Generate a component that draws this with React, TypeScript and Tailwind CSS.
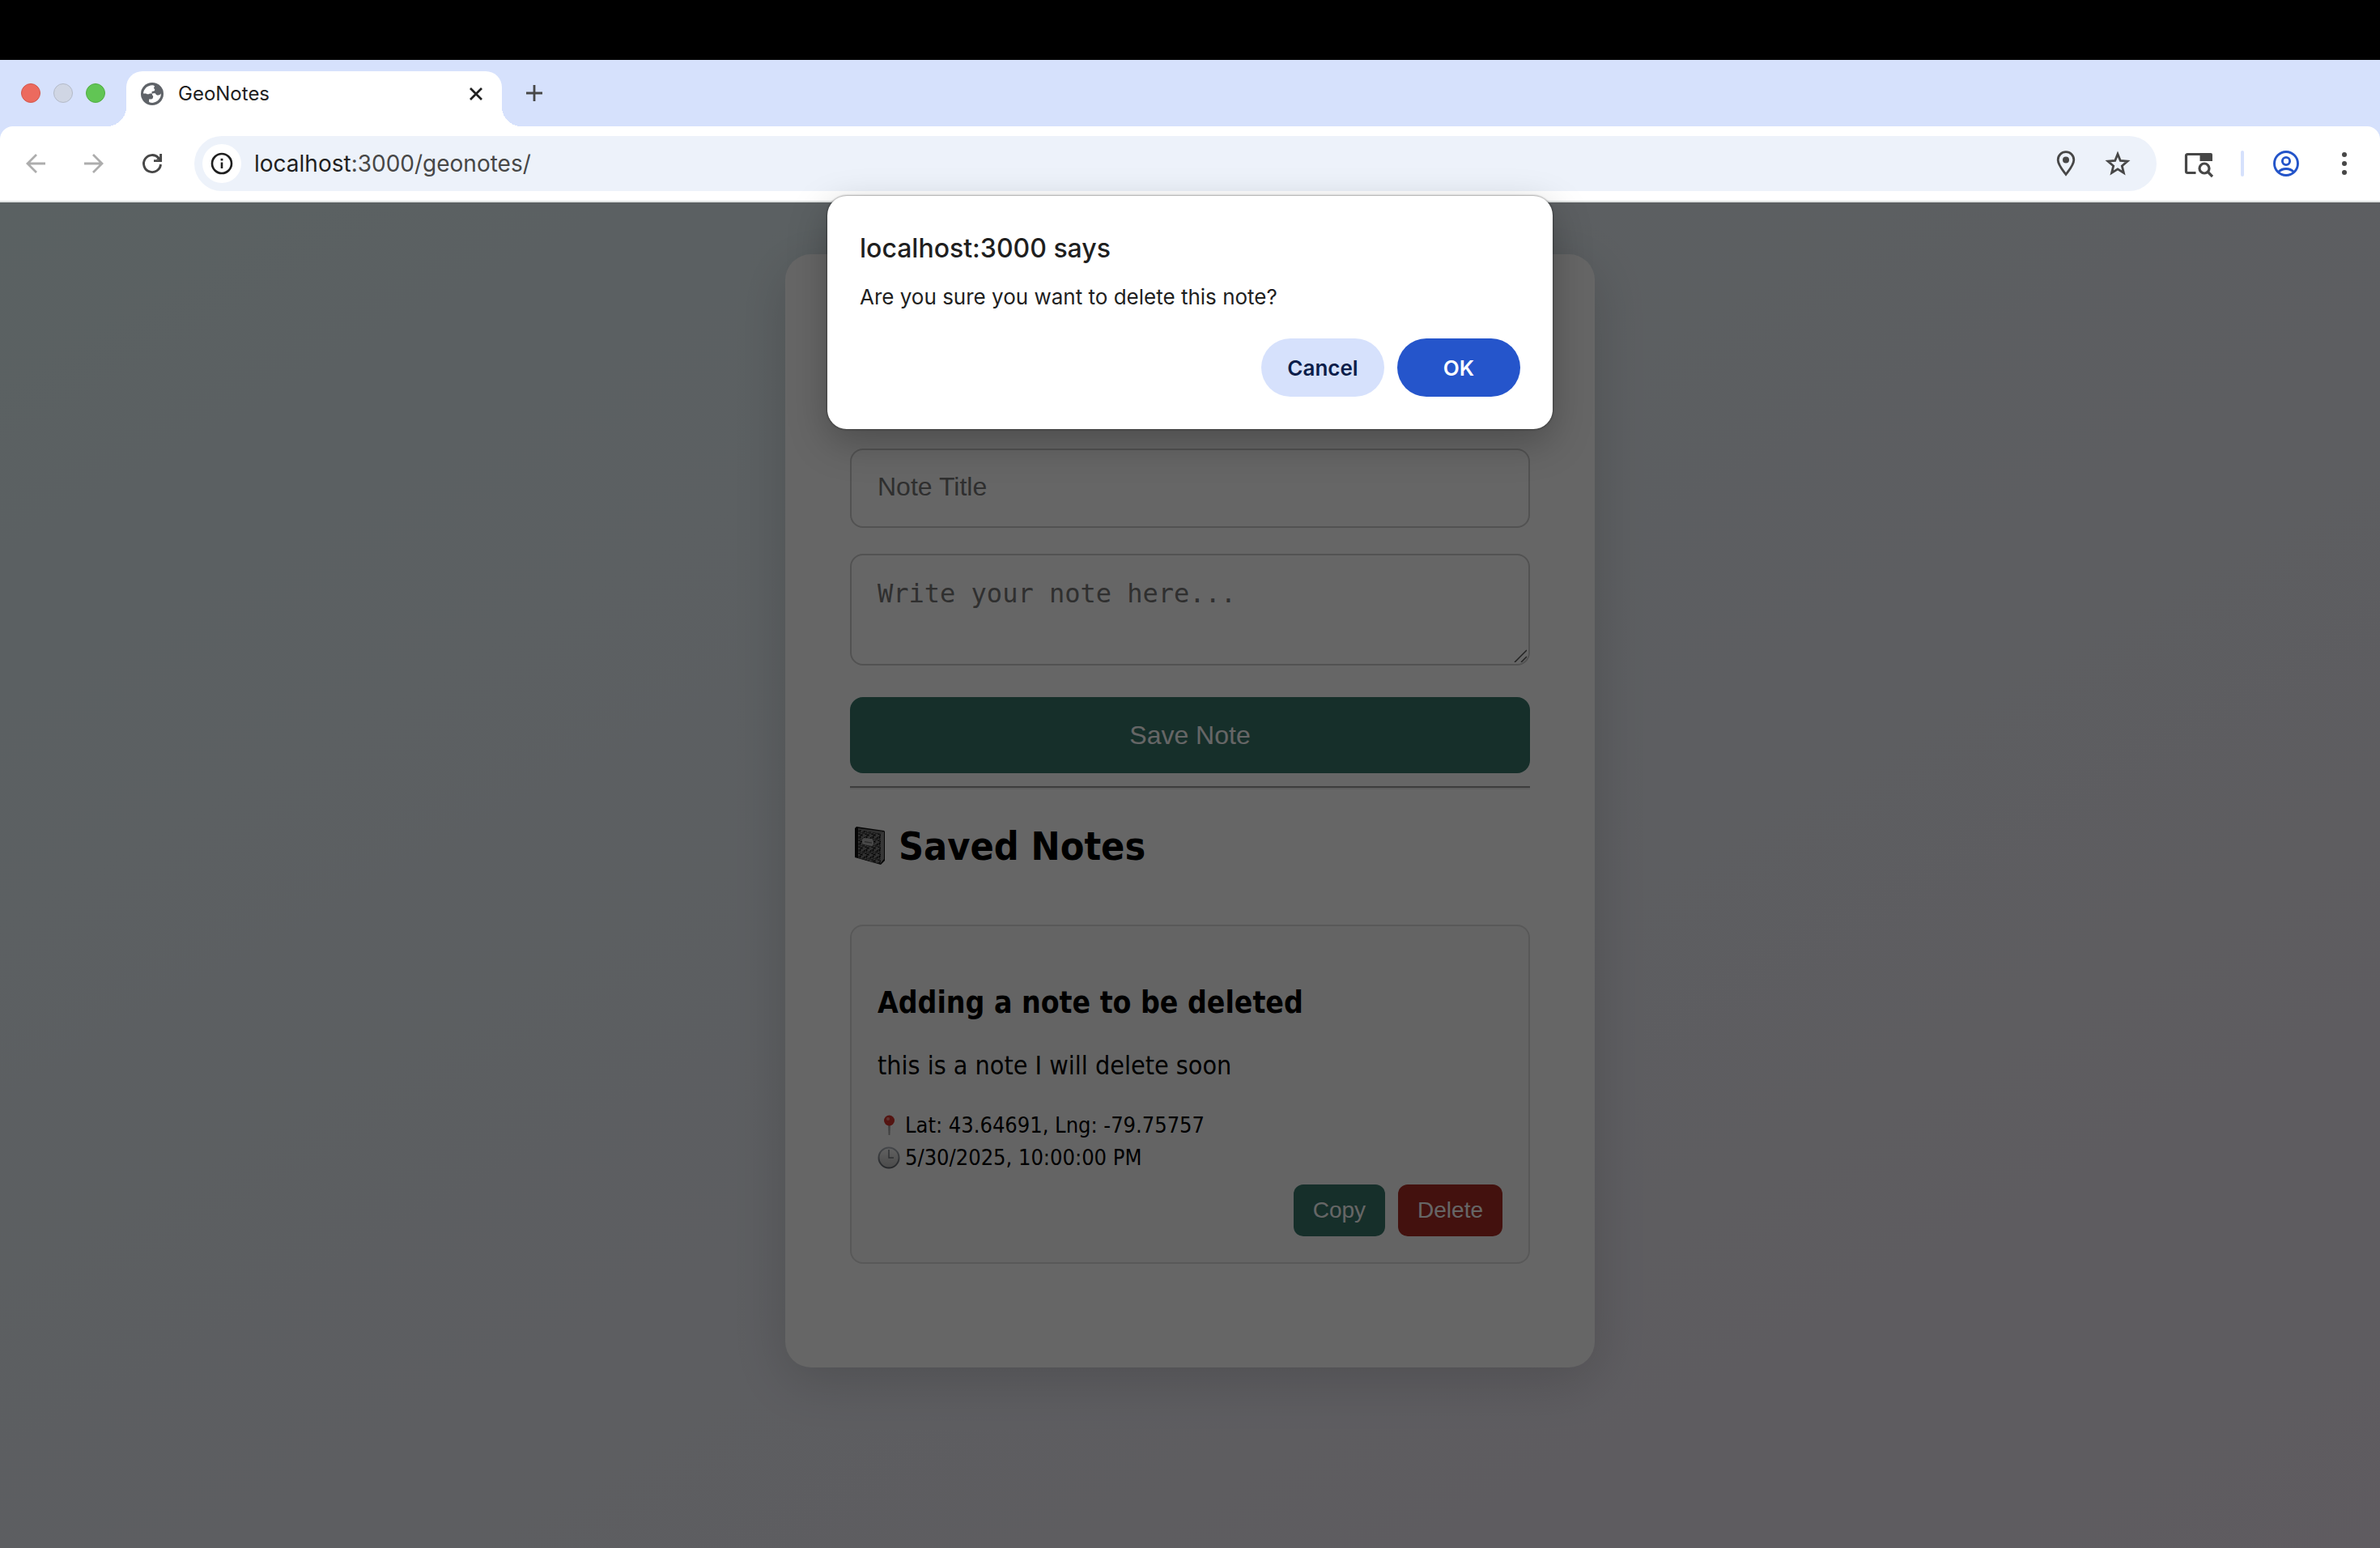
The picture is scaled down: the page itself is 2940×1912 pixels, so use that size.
import React from "react";

const TAHOMA = "font-['DejaVu_Sans_Condensed','DejaVu_Sans',sans-serif]";

function TrafficLights() {
  return (
    <div className="flex h-full items-center gap-4 pl-[26px]">
      <span className="size-6 rounded-full border border-[#d3564b] bg-[#ec6a5e]" />
      <span className="size-6 rounded-full border border-[#b3bac8] bg-[#d0d6e4]" />
      <span className="size-6 rounded-full border border-[#4fae41] bg-[#61c554]" />
    </div>
  );
}

function Tab() {
  return (
    <div className="relative ml-[26px] mt-[14px] flex w-[464px] items-center rounded-t-[20px] bg-white px-[18px] pb-3">
      <span className="absolute -left-6 bottom-0 size-6 bg-[radial-gradient(circle_at_0_0,transparent_24px,#fff_24px)]" />
      <span className="absolute -right-6 bottom-0 size-6 bg-[radial-gradient(circle_at_100%_0,transparent_24px,#fff_24px)]" />
      <svg className="size-7" viewBox="0 0 28 28" aria-hidden="true">
        <circle cx="14" cy="14" r="14" fill="#5f6368" />
        <path
          fill="#fff"
          d="M3 13.4C3.4 8 8 3.3 14.2 3.2c2.400 0 3.300 1.200 2.300 2.500-1 1-.5 1.700.5 2 .8 1.800-.4 3-2.200 3.100-1.600.1-1.700 1.600-.9 2.600H11c-1.200 1.300-3.200 1.200-4.600 0zM24.900 13.300c.3 6.200-4.600 11.400-10.600 11.600-1.600 0-3-.3-4.200-.9v-3.600h2.600c1.500 0 2.400-1 2.400-2.600v-1.600c-1.500-.1-1.700-2.300-.3-2.900h3.100c.5 1.600 2 2.600 3.800 2.300 1.600-.2 2.700-1 3.200-2.300z"
        />
      </svg>
      <span className="ml-[18px] flex-1 text-[24px] leading-8 text-[#1f1f1f]">GeoNotes</span>
      <button type="button" aria-label="Close tab" className="mr-[5px]">
        <svg className="size-[18px]" viewBox="0 0 18 18" stroke="#1f1f1f" strokeWidth="2.800">
          <path d="M2 2l14 14M16 2L2 16" />
        </svg>
      </button>
    </div>
  );
}

function Toolbar() {
  return (
    <div className="bg-[#d6e1fc]">
      <div className="flex h-[94px] items-center rounded-t-[16px] border-b-2 border-[#dfe2e1] bg-white px-7">
        <button type="button" aria-label="Back">
          <svg className="size-8" viewBox="0 0 32 32" fill="none" stroke="#adadad" strokeWidth="2.800">
            <path d="M28 16H6M17 5L6 16l11 11" />
          </svg>
        </button>
        <button type="button" aria-label="Forward" className="ml-10">
          <svg className="size-8" viewBox="0 0 32 32" fill="none" stroke="#adadad" strokeWidth="2.800">
            <path d="M4 16h22M15 5l11 11-11 11" />
          </svg>
        </button>
        <button type="button" aria-label="Reload" className="ml-10">
          <svg className="size-8" viewBox="0 0 32 32" fill="none" stroke="#474747" strokeWidth="2.900">
            <path d="M26.500 17A10.500 10.500 0 1 1 23.800 9l2.700 3" />
            <path d="M26.600 4v8.600H18" />
            <path d="M25 8v3h-4z" fill="#474747" stroke="none" />
          </svg>
        </button>
        <div className="ml-9 flex h-[68px] flex-1 items-center rounded-full bg-[#edf2fa] pr-8 pl-[10px]">
          <button type="button" aria-label="View site information" className="flex size-12 items-center justify-center rounded-full bg-white">
            <svg className="size-7" viewBox="0 0 28 28" fill="none" stroke="#1f1f1f">
              <circle cx="14" cy="14" r="12" strokeWidth="2.600" />
              <path d="M14 12.500V20" strokeWidth="2.600" />
              <path d="M14 7.800v2.700" strokeWidth="2.800" />
            </svg>
          </button>
          <div className="ml-4 flex-1 text-[28px] leading-9 text-[#474747]">
            <span className="text-[#1f1f1f]">localhost</span>:3000/geonotes/
          </div>
          <button type="button" aria-label="Location">
            <svg className="size-8" viewBox="0 0 32 32" fill="none">
              <path d="M16 29.500C11.500 23.500 6.200 17.500 6.200 11.500a9.800 9.800 0 0 1 19.600 0c0 6-5.300 12-9.800 18z" stroke="#474747" strokeWidth="2.800" />
              <circle cx="16" cy="11.500" r="4" fill="#474747" />
            </svg>
          </button>
          <button type="button" aria-label="Bookmark this tab" className="ml-8">
            <svg className="size-8" viewBox="0 0 32 32" fill="none" stroke="#474747" strokeWidth="2.800">
              <path d="M16 4.300l3.300 8.200 8.700.7-6.700 5.700 2.100 8.600L16 22.900l-7.400 4.600 2.100-8.600L4 13.200l8.700-.7z" />
            </svg>
          </button>
        </div>
        <button type="button" aria-label="Search tabs" className="ml-[34px]">
          <svg className="size-9" viewBox="0 0 36 36" fill="none">
            <path d="M14.500 29.500H4.500a2 2 0 0 1-2-2V8.500a2 2 0 0 1 2-2H33" stroke="#474747" strokeWidth="3.200" />
            <path d="M19.500 5h13.500a2 2 0 0 1 2 2v8H19.500z" fill="#474747" />
            <circle cx="25" cy="24" r="6" stroke="#474747" strokeWidth="3.200" />
            <path d="M29 28l6 6" stroke="#474747" strokeWidth="3.200" />
          </svg>
        </button>
        <span className="ml-[34px] h-8 w-1 rounded-full bg-[#d6e1fc]" />
        <button type="button" aria-label="Profile" className="ml-9">
          <svg className="size-8" viewBox="0 0 32 32" fill="none" stroke="#2354c9" strokeWidth="2.900">
            <circle cx="16" cy="16" r="14.500" />
            <circle cx="16" cy="13" r="4.600" />
            <path d="M6.500 26.500c5-5.300 14-5.300 19 0" />
          </svg>
        </button>
        <button type="button" aria-label="Menu" className="ml-10">
          <svg className="size-8" viewBox="0 0 32 32" fill="#474747">
            <circle cx="16" cy="5" r="3" />
            <circle cx="16" cy="16" r="3" />
            <circle cx="16" cy="27" r="3" />
          </svg>
        </button>
      </div>
    </div>
  );
}

function NotebookIcon() {
  return (
    <svg className="size-12" viewBox="0 0 48 48" aria-hidden="true">
      <defs>
        <pattern id="marble" width="8" height="8" patternUnits="userSpaceOnUse">
          <rect width="8" height="8" fill="#4a4a4a" />
          <path d="M0 1h2v1h2v2H2v2H0zM5 0h2v1H5zM6 4h2v2H7v1H5V6h1zM2 7h2v1H2z" fill="#7c7c7c" />
          <path d="M3 1h1v1H3zM5 2h2v1H5zM1 5h1v2H1zM4 4h1v2H4z" fill="#151515" />
        </pattern>
      </defs>
      <path d="M6 2l2-2 34 5 1 1v36l-5 5L6 38z" fill="#111" />
      <path d="M38 8l4-2v34l-4 5z" fill="#8a8a8a" />
      <path d="M10 2l31 4-3 3-28-5z" fill="#777" />
      <path d="M10 4l28 5v37L10 39z" fill="url(#marble)" />
      <path d="M17 14l10 1 2 3v4l-2 2-10-2-2-2v-4z" fill="#b5b5b5" />
      <path d="M18 18l9 1.500v1.200L18 19.200z" fill="#666" />
    </svg>
  );
}

function PinIcon() {
  return (
    <svg className="size-7" viewBox="0 0 28 28" aria-hidden="true">
      <path d="M13 13h3l-.6 13h-1.800z" fill="#a4a4a4" />
      <circle cx="14.500" cy="8" r="6.500" fill="#d2322c" />
      <circle cx="13" cy="6" r="2" fill="#ee8078" />
    </svg>
  );
}

function ClockIcon() {
  return (
    <svg className="size-7" viewBox="0 0 28 28" aria-hidden="true">
      <defs>
        <linearGradient id="face" x1="0" y1="0" x2="0" y2="1">
          <stop offset="0" stopColor="#f4f4f4" />
          <stop offset="1" stopColor="#b9b9b9" />
        </linearGradient>
        <linearGradient id="rim" x1="0" y1="0" x2="0" y2="1">
          <stop offset="0" stopColor="#aab0b8" />
          <stop offset="1" stopColor="#5f646b" />
        </linearGradient>
      </defs>
      <circle cx="14" cy="14" r="12.500" fill="url(#face)" stroke="url(#rim)" strokeWidth="2" />
      <path d="M14 4v10h6" fill="none" stroke="#70757c" strokeWidth="1.400" />
    </svg>
  );
}

function NotesPage() {
  return (
    <main className={`min-h-[1662px] bg-[linear-gradient(to_bottom_right,#e2f3f6_0%,#ede4ef_100%)] px-4 pt-16 ${TAHOMA}`}>
      <section className="mx-auto flex w-full max-w-[1000px] flex-col rounded-[32px] bg-white px-20 pt-[240px] pb-32 shadow-[0_16px_64px_rgba(0,0,0,0.15)]">
        <input
          aria-label="Note Title"
          placeholder="Note Title"
          className="h-[98px] w-full rounded-[16px] border-2 border-[#ccc] px-8 pb-1 font-['Liberation_Sans',sans-serif] text-[32px] placeholder:text-[#757575]"
        />
        <div className="relative mt-8 flex">
          <textarea
            aria-label="Note text"
            placeholder="Write your note here..."
            className="h-[138px] w-full resize-none rounded-[16px] border-2 border-[#ccc] px-8 py-7 font-['DejaVu_Sans_Mono',monospace] text-[32px] leading-[38px] placeholder:text-[#757575]"
          />
          <svg className="absolute right-1 bottom-1 size-4" viewBox="0 0 16 16" stroke="#555" strokeWidth="1.500" aria-hidden="true">
            <path d="M1 16L16 1M9 16l7-7" />
          </svg>
        </div>
        <button type="button" className="mt-[39px] h-[94px] rounded-[16px] bg-[#37766a] font-['Liberation_Sans',sans-serif] text-[32px] text-white">
          Save Note
        </button>
        <hr className="mt-4 h-1 border-t-2 border-b-2 border-t-[#9a9a9a] border-b-[#eee]" />
        <h2 className="mt-[41px] flex items-center text-[48px] leading-[58px] font-bold">
          <NotebookIcon />
          <span className="ml-3">Saved Notes</span>
        </h2>
        <article className="mt-[68px] flex flex-col rounded-[16px] border-2 border-[#ddd] bg-[#f9f9f9] px-8 pt-[72px] pb-8">
          <h3 className="text-[37px] leading-[46px] font-bold">Adding a note to be deleted</h3>
          <p className="mt-[34px] text-[32px] leading-10">this is a note I will delete soon</p>
          <div className="mt-[34px] text-[27px] leading-10">
            <div className="flex items-center gap-[6px]">
              <PinIcon />
              Lat: 43.64691, Lng: -79.75757
            </div>
            <div className="flex items-center gap-[6px]">
              <ClockIcon />
              5/30/2025, 10:00:00 PM
            </div>
          </div>
          <div className="mt-[13px] flex justify-end gap-4 font-['Liberation_Sans',sans-serif] text-[28px] leading-8 text-white">
            <button type="button" className="rounded-[12px] bg-[#37766a] px-6 py-4">Copy</button>
            <button type="button" className="rounded-[12px] bg-[#a92c23] px-6 py-4">Delete</button>
          </div>
        </article>
      </section>
    </main>
  );
}

function ConfirmDialog() {
  return (
    <div
      role="dialog"
      aria-labelledby="dialog-title"
      className="absolute inset-x-0 -top-2 mx-auto flex w-[896px] flex-col rounded-[24px] bg-white p-10 text-[#1f1f1f] shadow-[0_0_2px_1px_rgba(0,0,0,0.3),0_16px_48px_rgba(0,0,0,0.25)]"
    >
      <h1 id="dialog-title" className="mt-[5px] text-[32px] leading-10 font-medium">localhost:3000 says</h1>
      <p className="mt-5 text-[26px] leading-10">Are you sure you want to delete this note?</p>
      <div className="mt-[31px] flex justify-end gap-4 text-[26px] font-semibold">
        <button type="button" className="h-[72px] w-[152px] rounded-full bg-[#d6e1fc] text-[#0b1d4a]">Cancel</button>
        <button type="button" className="h-[72px] w-[152px] rounded-full bg-[#2555cb] text-white">OK</button>
      </div>
    </div>
  );
}

export default function App() {
  return (
    <div className="flex min-h-screen flex-col overflow-hidden font-[Inter,sans-serif]">
      <div className="h-[74px] bg-black" />
      <div className="flex h-[82px] items-stretch bg-[#d6e1fc]">
        <TrafficLights />
        <Tab />
        <button type="button" aria-label="New tab" className="ml-7">
          <svg className="size-6" viewBox="0 0 24 24" stroke="#474747" strokeWidth="2.800">
            <path d="M12 2v20M2 12h20" />
          </svg>
        </button>
      </div>
      <Toolbar />
      <div className="relative flex-1">
        <NotesPage />
        <div className="absolute inset-0 bg-black/60" />
        <ConfirmDialog />
      </div>
    </div>
  );
}
